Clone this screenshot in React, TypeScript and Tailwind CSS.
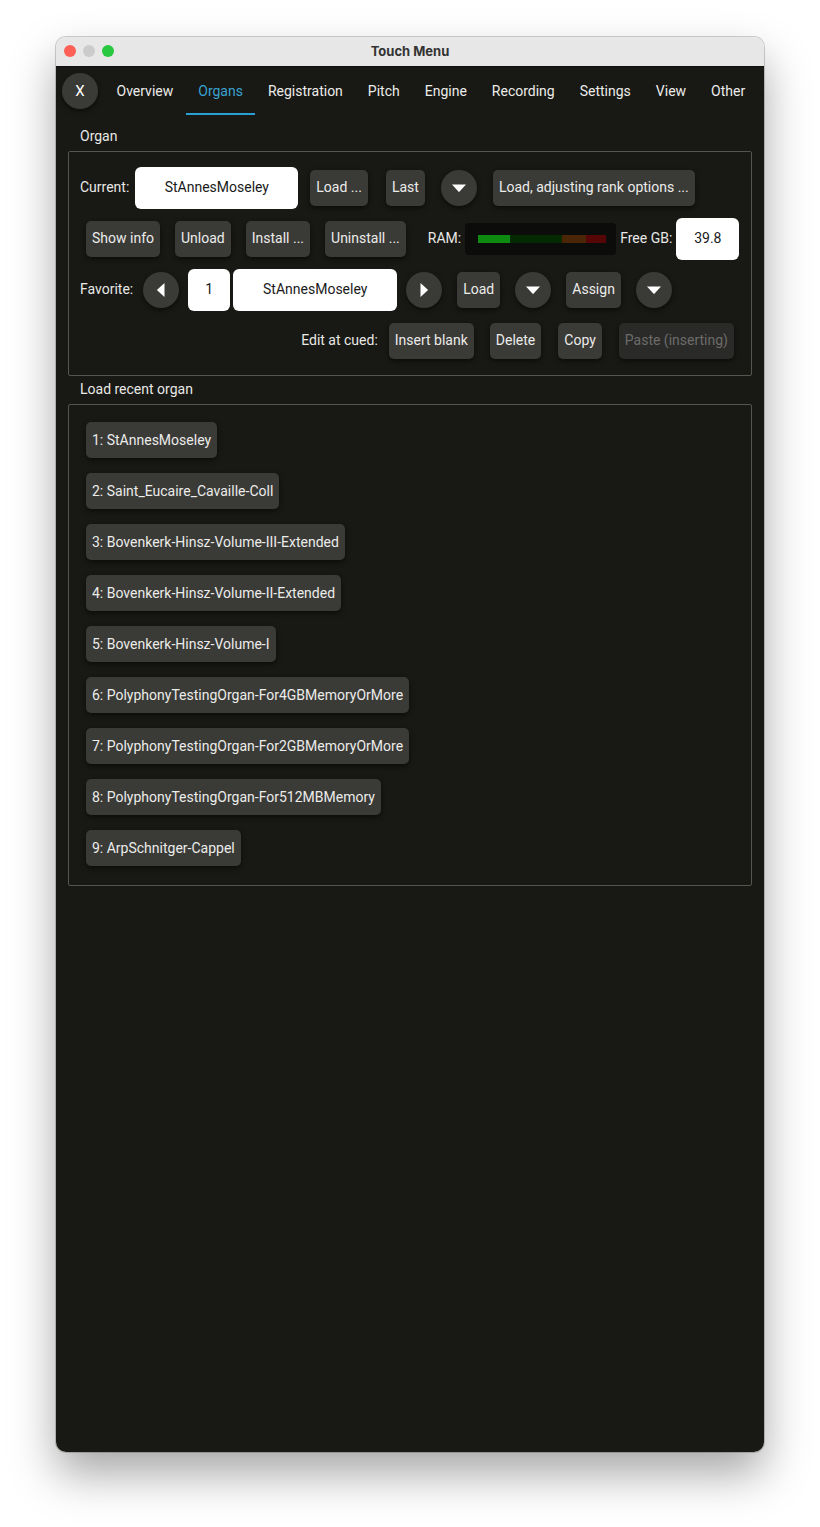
import React from 'react';

const tabs = ['Overview', 'Organs', 'Registration', 'Pitch', 'Engine', 'Recording', 'Settings', 'View', 'Other'];

const recent = [
  '1: StAnnesMoseley',
  '2: Saint_Eucaire_Cavaille-Coll',
  '3: Bovenkerk-Hinsz-Volume-III-Extended',
  '4: Bovenkerk-Hinsz-Volume-II-Extended',
  '5: Bovenkerk-Hinsz-Volume-I',
  '6: PolyphonyTestingOrgan-For4GBMemoryOrMore',
  '7: PolyphonyTestingOrgan-For2GBMemoryOrMore',
  '8: PolyphonyTestingOrgan-For512MBMemory',
  '9: ArpSchnitger-Cappel',
];

function Btn({ children, className = '', disabled = false }: { children: React.ReactNode; className?: string; disabled?: boolean }) {
  return (
    <button
      className={
        'h-9 shrink-0 whitespace-nowrap rounded-[5px] px-[6px] text-[14px] shadow-[0_2px_5px_rgba(0,0,0,0.55)] ' +
        (disabled ? 'bg-[#2a2a28] text-[#6c6c6a] ' : 'bg-[#3a3a37] text-[#ececea] ') +
        className
      }
    >
      {children}
    </button>
  );
}

function Field({ children, className = '' }: { children: React.ReactNode; className?: string }) {
  return (
    <div className={'flex h-[42px] shrink-0 items-center justify-center rounded-[6px] bg-white text-[14px] text-[#1a1a1a] ' + className}>
      {children}
    </div>
  );
}

function Circle({ dir, className = '' }: { dir: 'down' | 'left' | 'right'; className?: string }) {
  return (
    <button className={'flex h-9 w-9 shrink-0 items-center justify-center rounded-full bg-[#3a3a37] shadow-[0_2px_5px_rgba(0,0,0,0.55)] ' + className}>
      {dir === 'down' && (
        <svg width="16" height="10" viewBox="0 0 16 10">
          <path d="M1 1.5 H15 L8.6 8.6 Q8 9.2 7.4 8.6 Z" fill="#fff" />
        </svg>
      )}
      {dir === 'left' && (
        <svg width="10" height="16" viewBox="0 0 10 16">
          <path d="M8.5 1 V15 L1.4 8.6 Q0.8 8 1.4 7.4 Z" fill="#fff" />
        </svg>
      )}
      {dir === 'right' && (
        <svg width="10" height="16" viewBox="0 0 10 16">
          <path d="M1.5 1 V15 L8.6 8.6 Q9.2 8 8.6 7.4 Z" fill="#fff" />
        </svg>
      )}
    </button>
  );
}

export default function App() {
  return (
    <div className="h-[1527px] w-[820px] bg-white pl-[56px] pt-[37px]" style={{ fontFamily: 'Roboto, "Noto Sans", sans-serif' }}>
      <div className="flex h-[1415px] w-[708px] flex-col overflow-hidden rounded-[10px] shadow-[0_22px_45px_rgba(0,0,0,0.35),0_0_0_1px_rgba(0,0,0,0.18)]">
        {/* title bar */}
        <div className="relative flex h-[30px] shrink-0 items-center justify-center border-b border-[#111] bg-[#e7e7e7]">
          <div className="absolute left-[8px] top-[8px] flex gap-[7px]">
            <span className="h-3 w-3 rounded-full bg-[#fe5f57]" />
            <span className="h-3 w-3 rounded-full bg-[#cbcbcb]" />
            <span className="h-3 w-3 rounded-full bg-[#28c840]" />
          </div>
          <span className="text-[13px] font-bold text-[#333]" style={{ fontFamily: 'Inter, "Liberation Sans", sans-serif' }}>
            Touch Menu
          </span>
        </div>

        <div className="flex flex-1 flex-col bg-[#181814] text-[14px] text-[#e8e8e6]">
          {/* tabs */}
          <div className="flex h-[48px] shrink-0 items-center">
            <button className="ml-[6px] flex h-9 w-9 items-center justify-center rounded-full bg-[#3a3a37] text-[15px] text-white shadow-[0_2px_5px_rgba(0,0,0,0.55)]">
              X
            </button>
            <div className="ml-[6px] flex h-full">
              {tabs.map((t) => (
                <div
                  key={t}
                  className={
                    'flex h-full items-center border-b-2 px-[12.5px] pt-[2px] text-[14px] ' +
                    (t === 'Organs' ? 'border-[#2a9fd6] text-[#3aa3d2]' : 'border-transparent text-[#ececea]')
                  }
                >
                  {t}
                </div>
              ))}
            </div>
          </div>

          <div className="flex h-[36px] shrink-0 items-end pb-[4px] pl-[24px]">Organ</div>

          {/* organ group */}
          <div className="mx-3 rounded-[2px] border border-[#55554f] pb-[9px] pt-[10px]">
            <div className="flex h-[51px] items-center pl-[11px]">
              <span>Current:</span>
              <Field className="ml-[6px] w-[163px]">StAnnesMoseley</Field>
              <Btn className="ml-[12px]">Load ...</Btn>
              <Btn className="ml-[18px]">Last</Btn>
              <Circle dir="down" className="ml-[16px]" />
              <Btn className="ml-[16px]">Load, adjusting rank options ...</Btn>
            </div>

            <div className="flex h-[51px] items-center pl-[17px]">
              <Btn>Show info</Btn>
              <Btn className="ml-[15px]">Unload</Btn>
              <Btn className="ml-[15px]">Install ...</Btn>
              <Btn className="ml-[15px]">Uninstall ...</Btn>
              <span className="ml-[22px]">RAM:</span>
              <div className="ml-[4px] flex h-[32px] w-[151px] items-center rounded-[4px] bg-[#0c0c0a] pl-[13px]">
                <div className="flex h-[8px]">
                  <div className="w-[32px] bg-[#0d8a10]" />
                  <div className="w-[52px] bg-[#032a03]" />
                  <div className="w-[24px] bg-[#4a2606]" />
                  <div className="w-[20px] bg-[#560606]" />
                </div>
              </div>
              <span className="ml-[4px]">Free GB:</span>
              <Field className="ml-[4px] w-[63px]">39.8</Field>
            </div>

            <div className="flex h-[51px] items-center pl-[11px]">
              <span>Favorite:</span>
              <Circle dir="left" className="ml-[10px]" />
              <Field className="ml-[9px] w-[42px]">1</Field>
              <Field className="ml-[3px] w-[164px]">StAnnesMoseley</Field>
              <Circle dir="right" className="ml-[9px]" />
              <Btn className="ml-[15px]">Load</Btn>
              <Circle dir="down" className="ml-[15px]" />
              <Btn className="ml-[15px]">Assign</Btn>
              <Circle dir="down" className="ml-[15px]" />
            </div>

            <div className="flex h-[51px] items-center justify-end pr-[17px]">
              <span>Edit at cued:</span>
              <Btn className="ml-[11px]">Insert blank</Btn>
              <Btn className="ml-[16px]">Delete</Btn>
              <Btn className="ml-[17px]">Copy</Btn>
              <Btn className="ml-[17px]" disabled>
                Paste (inserting)
              </Btn>
            </div>
          </div>

          <div className="flex h-[28px] shrink-0 items-start pl-[24px] pt-[3px]">Load recent organ</div>

          {/* recent group */}
          <div className="mx-3 flex flex-col items-start gap-[15px] rounded-[2px] border border-[#55554f] pb-[19px] pl-[17px] pt-[17px]">
            {recent.map((r) => (
              <Btn key={r}>{r}</Btn>
            ))}
          </div>
        </div>
      </div>
    </div>
  );
}
